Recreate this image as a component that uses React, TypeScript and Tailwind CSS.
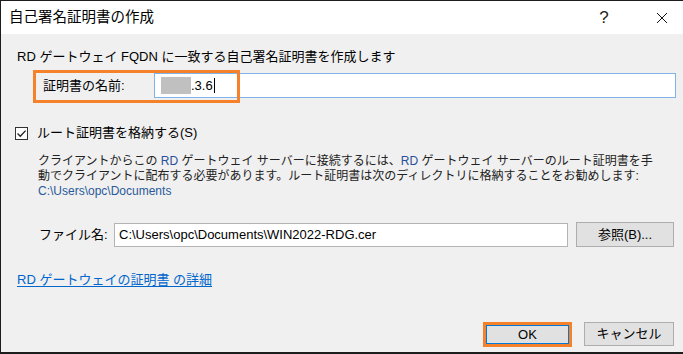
import React from "react";

const font = "font-['Liberation_Sans','Noto_Sans_CJK_JP',sans-serif]";

const CloseIcon = () => (
  <svg width="12" height="12" viewBox="0 0 12 12">
    <path d="M1 1 L11 11 M11 1 L1 11" stroke="#111" strokeWidth="1" fill="none" />
  </svg>
);

const CheckBox = () => (
  <div className="w-[13px] h-[13px] border border-[#333] bg-white flex items-center justify-center">
    <svg width="11" height="11" viewBox="0 0 11 11">
      <path d="M1.5 5.5 L4.3 8.3 L9.6 2.6" stroke="#222" strokeWidth="1.3" fill="none" />
    </svg>
  </div>
);

const App = () => {
  return (
    <div
      className={`w-[683px] h-[354px] bg-[#f0f0f0] border-t border-l border-b-2 border-[#1c1c1c] flex flex-col text-black ${font}`}
    >
      {/* title bar */}
      <div className="h-[33px] bg-white flex items-center pl-[8px] shrink-0">
        <span className="text-[14.5px] leading-none">自己署名証明書の作成</span>
        <div className="ml-auto flex items-center gap-[38px] mr-[11px]">
          <span className="w-[20px] text-center text-[17px] leading-none text-[#222] font-['Liberation_Sans',sans-serif]">?</span>
          <span className="w-[20px] flex justify-center">
            <CloseIcon />
          </span>
        </div>
      </div>

      <div className="flex flex-col flex-1 pl-[16px]">
        <p className="mt-[14px] text-[13px] leading-[18px]">
          RD ゲートウェイ FQDN に一致する自己署名証明書を作成します
        </p>

        <div className="relative mt-[7px] ml-[26px] h-[25px] flex items-center">
          <span className="w-[111px] text-[13px]">証明書の名前:</span>
          <div className="w-[522px] h-[25px] bg-white border border-[#7eb4ea] flex items-center pl-[6px]">
            <span className="w-[30px] h-[17px] bg-[#c0c0c0]" />
            <span className="text-[13px] leading-none">.3.6</span>
            <span className="w-px h-[15px] bg-black ml-[1px]" />
          </div>
          {/* annotation box */}
          <div className="absolute -left-[10px] -top-[3px] w-[207px] h-[33px] border-[3px] border-[#f5822a]" />
        </div>

        <div className="mt-[27px] -ml-[2px] h-[16px] flex items-center gap-[9px]">
          <CheckBox />
          <span className="text-[13px]">ルート証明書を格納する(S)</span>
        </div>

        <p className="mt-[13px] ml-[21px] text-[12px] leading-[15px] text-[#222] whitespace-nowrap">
          クライアントからこの <span className="text-[#2a4f9a]">RD</span> ゲートウェイ サーバーに接続するには、
          <span className="text-[#2a4f9a]">RD</span> ゲートウェイ サーバーのルート証明書を手
          <br />
          動でクライアントに配布する必要があります。ルート証明書は次のディレクトリに格納することをお勧めします:
          <br />
          <span className="text-[#2a5a9a]">C:\Users\opc\Documents</span>
        </p>

        <div className="mt-[23px] ml-[22px] h-[25px] flex items-center">
          <span className="w-[75px] text-[13px]">ファイル名:</span>
          <div className="w-[454px] h-[24px] bg-white border border-[#b4b4b4] flex items-center pl-[4px] text-[13px]">
            C:\Users\opc\Documents\WIN2022-RDG.cer
          </div>
          <button className="ml-[8px] w-[98px] h-[25px] bg-[#e1e1e1] border border-[#adadad] text-[13px] flex items-center justify-center">
            参照(B)...
          </button>
        </div>

        <a className="mt-[24px] self-start text-[13px] leading-[18px] text-[#0066cc] underline underline-offset-2">
          RD ゲートウェイの証明書 の詳細
        </a>

        <div className="mt-auto mb-[5px] pr-[9px] flex justify-end gap-[12px]">
          <div className="relative w-[89px] h-[25px]">
            <button className="w-full h-full bg-[#e1e1e1] border border-[#0078d7] shadow-[inset_0_0_0_3px_#0078d7] text-[13px] flex items-center justify-center">
              OK
            </button>
            {/* annotation box */}
            <div className="absolute inset-0 border-[3px] border-[#f5822a]" />
          </div>
          <button className="w-[90px] h-[24px] bg-[#e1e1e1] border border-[#adadad] text-[13px] flex items-center justify-center">
            キャンセル
          </button>
        </div>
      </div>
    </div>
  );
};

export default App;
